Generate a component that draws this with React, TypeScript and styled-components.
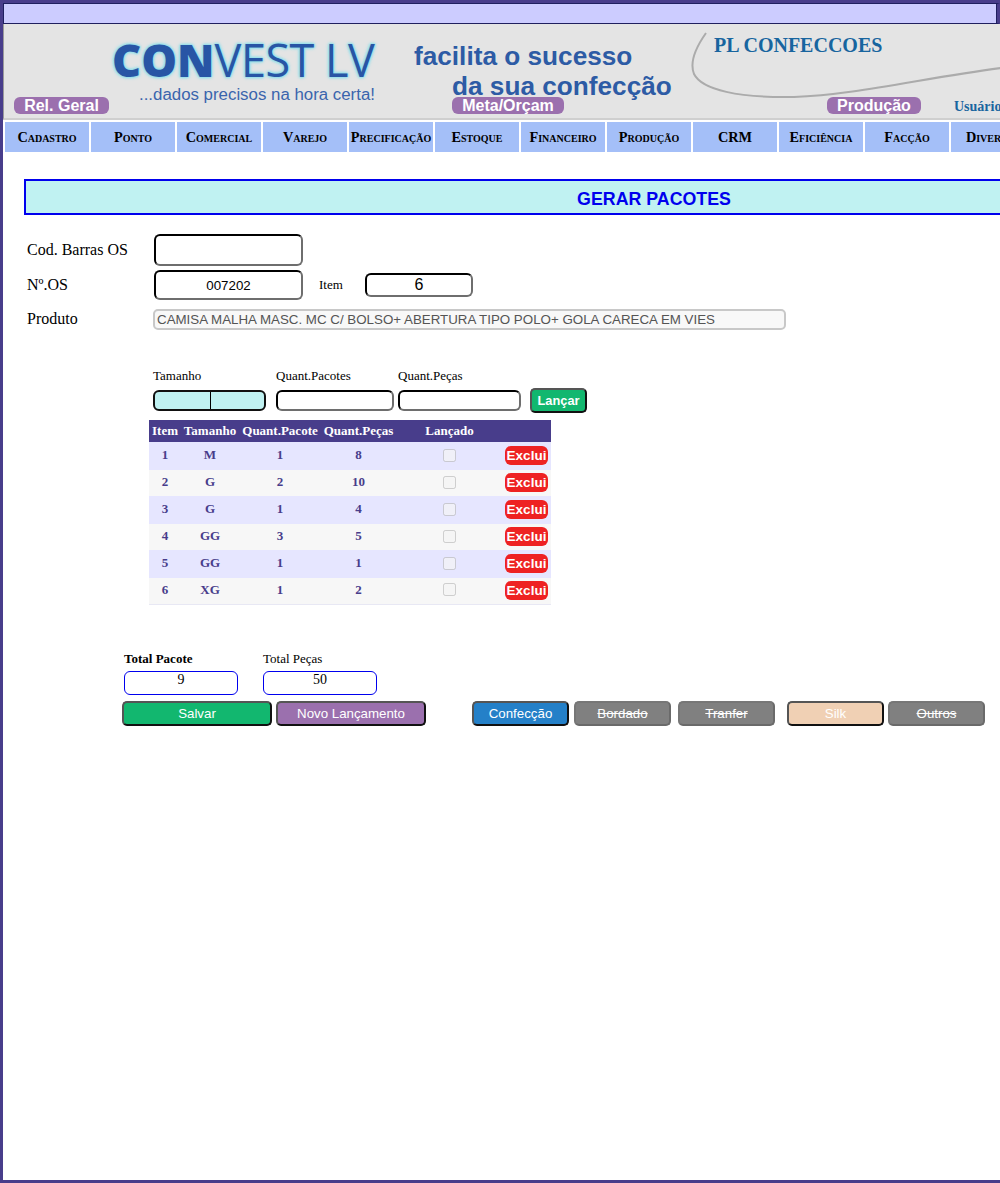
import styled, { createGlobalStyle, css } from 'styled-components';

const GlobalStyle = createGlobalStyle`
    html, body {
        margin: 0;
        padding: 0;
        height: 1183px;
        overflow: hidden;
        background: #fff;
        font-family: "Liberation Serif", serif;
    }
`;

const Frame = styled.div`
    box-sizing: border-box;
    width: 1000px;
    height: 1183px;
    overflow: hidden;
    border-top: 3px solid #483d8b;
    border-bottom: 3px solid #483d8b;
    border-left: 3px solid #483d8b;
`;

const TopBar = styled.div`
    box-sizing: border-box;
    height: 21px;
    background: #ccccff;
    border: 1px solid #1f1f5f;
    border-right: 3px solid #483d8b;
    box-shadow: inset -1px 0 0 #1f1f5f;
`;

const Banner = styled.header`
    position: relative;
    box-sizing: border-box;
    width: 997px;
    height: 96px;
    overflow: hidden;
    display: grid;
    grid-template-columns: 410px 278px 1fr;
    grid-template-rows: 73px 21px;
    background: #e4e4e4;
    border-left: 1px solid #9a9a9a;
    border-bottom: 2px solid #cfcfcf;
`;

const LogoBlock = styled.div`
    padding: 14px 0 0 108px;
`;

const LogoName = styled.div`
    font-family: "Open Sans", sans-serif;
    font-size: 45px;
    line-height: 44px;
    color: #2855a5;
    white-space: nowrap;
    text-shadow: 0 0 1px #93dfeb, 0 0 2px #93dfeb, 0 0 3px #93dfeb, 0 0 3px #93dfeb, 0 0 4px #93dfeb;
    b { font-weight: 800; }
    span { font-weight: 400; letter-spacing: -0.5px; }
`;

const Tagline = styled.div`
    margin: 4px 0 0 27px;
    font-family: "Liberation Sans", sans-serif;
    font-size: 16.85px;
    line-height: 18px;
    color: #3a64ad;
    white-space: nowrap;
`;

const Slogan = styled.div`
    padding-top: 17px;
    font-family: "Liberation Sans", sans-serif;
    font-weight: bold;
    font-size: 26.2px;
    line-height: 30px;
    color: #2d5ba5;
    white-space: nowrap;
    div + div { margin-left: 38px; }
`;

const Company = styled.div`
    padding: 10px 0 0 22px;
    font-weight: bold;
    font-size: 20px;
    line-height: 22px;
    color: #18659f;
    white-space: nowrap;
`;

const PillRow = styled.div`
    grid-column: 1 / -1;
    display: flex;
    align-items: flex-start;
    padding-left: 10px;
`;

const Pill = styled.div<{ $w: number; $mr: number }>`
    box-sizing: border-box;
    flex: 0 0 ${p => p.$w}px;
    margin-right: ${p => p.$mr}px;
    height: 17px;
    border-radius: 6px;
    background: #9b70ae;
    color: #fff;
    font-family: "Liberation Sans", sans-serif;
    font-weight: bold;
    font-size: 16px;
    line-height: 17px;
    text-align: center;
    white-space: nowrap;
`;

const UserLabel = styled.div`
    flex: none;
    font-weight: bold;
    font-size: 14px;
    line-height: 19px;
    color: #18659f;
`;

const ClippedLink = styled.div`
    position: absolute;
    left: 171px;
    top: 91px;
    font-family: "Liberation Sans", sans-serif;
    font-size: 13px;
    font-weight: bold;
    color: #0000ff;
`;

const Swoosh = styled.svg`
    position: absolute;
    left: 0;
    top: 0;
    pointer-events: none;
`;

const MenuBar = styled.nav`
    display: flex;
    gap: 2px;
    width: 1100px;
    margin: 2px 0 0 2px;
`;

const MenuItem = styled.div`
    flex: 0 0 84px;
    height: 30px;
    background: #a4bff8;
    color: #000;
    font-weight: bold;
    font-variant: small-caps;
    font-size: 14.3px;
    line-height: 30px;
    text-align: center;
    white-space: nowrap;
`;

const Title = styled.h1`
    box-sizing: border-box;
    width: 1260px;
    height: 36px;
    margin: 27px 0 0 21px;
    background: #c0f2f2;
    border: 2px solid #0000ee;
    color: #0000ee;
    font-family: "Liberation Sans", sans-serif;
    font-size: 17.8px;
    line-height: 37px;
    font-weight: bold;
    text-align: center;
`;

const Form = styled.section`
    padding: 19px 0 0 24px;
    display: grid;
    grid-template-columns: 127px auto;
    justify-content: start;
`;

const FieldLabel = styled.label<{ $mt?: number }>`
    font-size: 16px;
    align-self: center;
    margin-top: ${p => p.$mt ?? 0}px;
`;

const fieldBase = css`
    box-sizing: border-box;
    border-style: inset;
    border-width: 2px;
    border-color: #222 #6e6e6e #6e6e6e #222;
    border-radius: 6px;
    background: #fff;
    text-align: center;
    color: #000;
    outline: none;
    padding: 0;
`;

const InputRow = styled.div<{ $mt?: number }>`
    display: flex;
    align-items: center;
    margin-top: ${p => p.$mt ?? 0}px;
`;

const BigInput = styled.input`
    ${fieldBase}
    width: 149px;
    height: ${p => (p.readOnly ? 30 : 32)}px;
    font-family: "Liberation Sans", sans-serif;
    font-size: 13.33px;
`;

const ItemLabel = styled.span`
    margin: 0 22px 0 16px;
    font-size: 13px;
`;

const ItemInput = styled.input`
    ${fieldBase}
    width: 108px;
    height: 24px;
    font-family: "Liberation Sans", sans-serif;
    font-size: 16px;
`;

const ProductInput = styled.input`
    box-sizing: border-box;
    width: 633px;
    height: 21px;
    margin-left: -1px;
    padding: 0 2px;
    border: 2px solid #c8c8c8;
    border-radius: 5px;
    background: #f8f8f8;
    color: #545454;
    font-family: "Liberation Sans", sans-serif;
    font-size: 13.33px;
`;

const EntryGrid = styled.div`
    display: grid;
    grid-template-columns: 113px 128px 127px 66px;
    margin: 39px 0 0 150px;
`;

const EntryLabel = styled.label<{ $ml?: number }>`
    font-size: 13px;
    line-height: 14px;
    margin-left: ${p => p.$ml ?? 0}px;
`;

const EntryInput = styled.input<{ $ml?: number; $w: number }>`
    ${fieldBase}
    display: block;
    width: ${p => p.$w}px;
    height: 21px;
    margin: 7px 0 0 ${p => p.$ml ?? 0}px;
`;

const ActiveEntry = styled.div`
    position: relative;
    box-sizing: border-box;
    width: 113px;
    height: 21px;
    margin-top: 7px;
    border: 2px solid #111;
    border-radius: 6px;
    background: #c0f2f2;

    &::after {
        content: '';
        position: absolute;
        left: 55px;
        top: 0;
        width: 1px;
        height: 17px;
        background: #000;
    }
`;

const LaunchButton = styled.button`
    box-sizing: border-box;
    width: 57px;
    height: 25px;
    margin: 5px 0 0 9px;
    padding: 0;
    border: 2px solid;
    border-color: #555 #111 #111 #555;
    border-radius: 5px;
    background: #12b76f;
    color: #fff;
    font-family: "Liberation Sans", sans-serif;
    font-size: 12.8px;
    font-weight: bold;
`;

const ItemsTable = styled.table`
    width: 402px;
    margin: 7px 0 0 146px;
    table-layout: fixed;
    border-collapse: collapse;
    border-bottom: 1px solid #e8e8f4;
    font-size: 13px;
    font-weight: bold;
    text-align: center;
    color: #483d8b;
`;

const HeadRow = styled.tr`
    height: 22px;
    background: #483d8b;
    color: #fff;
`;

const HeadCell = styled.th<{ $w?: number }>`
    padding: 0;
    white-space: nowrap;
    ${p => (p.$w ? `width: ${p.$w}px;` : '')}
`;

const BodyRow = styled.tr<{ $odd: boolean }>`
    height: ${p => (p.$odd ? 28 : 26)}px;
    background: ${p => (p.$odd ? '#e6e6ff' : '#f7f7f7')};
`;

const BodyCell = styled.td`
    padding: 0 0 2px;
`;

const ButtonCell = styled.td`
    padding: 0 0 1px;
`;

const RowCheck = styled.input`
    display: block;
    margin: 0 auto;
    width: 13px;
    height: 13px;
`;

const DeleteButton = styled.button`
    display: block;
    box-sizing: border-box;
    width: 43px;
    height: 19px;
    margin: 0 3px 0 2px;
    padding: 0;
    border: none;
    border-radius: 6px;
    background: #ee2222;
    color: #fff;
    font-family: "Liberation Sans", sans-serif;
    font-size: 13.5px;
    line-height: 19px;
    font-weight: bold;
`;

const TotalsRow = styled.div`
    display: flex;
    gap: 25px;
    margin: 47px 0 0 121px;
`;

const TotalField = styled.div`
    width: 114px;
`;

const TotalLabel = styled.label<{ $bold?: boolean }>`
    display: block;
    font-size: 13px;
    line-height: 14px;
    font-weight: ${p => (p.$bold ? 'bold' : 'normal')};
`;

const TotalInput = styled.input`
    box-sizing: border-box;
    display: block;
    width: 114px;
    height: 24px;
    margin-top: 5px;
    padding: 0 0 6px;
    border: 1px solid #0000ee;
    border-radius: 6px;
    background: #fff;
    color: #000;
    font-family: "Liberation Serif", serif;
    font-size: 14px;
    text-align: center;
    outline: none;
`;

const ActionRow = styled.div`
    display: flex;
    margin: 6px 0 0 119px;
`;

const ActionButton = styled.button<{ $bg: string; $w: number; $ml: number; $off?: boolean }>`
    box-sizing: border-box;
    flex: 0 0 ${p => p.$w}px;
    height: 25px;
    margin-left: ${p => p.$ml}px;
    padding: 0;
    border: 2px solid;
    border-color: ${p => (p.$off ? '#777 #6a6a6a #6a6a6a #777' : '#555 #111 #111 #555')};
    border-radius: 5px;
    background: ${p => p.$bg};
    color: #fff;
    font-family: "Liberation Sans", sans-serif;
    font-size: 13.3px;
    text-decoration: ${p => (p.$off ? 'line-through' : 'none')};
`;

const menu = ['Cadastro', 'Ponto', 'Comercial', 'Varejo', 'Precificação', 'Estoque', 'Financeiro', 'Produção', 'CRM', 'Eficiência', 'Facção', 'Diversos'];

const rows = [
    { item: 1, size: 'M', packs: 1, pieces: 8 },
    { item: 2, size: 'G', packs: 2, pieces: 10 },
    { item: 3, size: 'G', packs: 1, pieces: 4 },
    { item: 4, size: 'GG', packs: 3, pieces: 5 },
    { item: 5, size: 'GG', packs: 1, pieces: 1 },
    { item: 6, size: 'XG', packs: 1, pieces: 2 },
];

const actions = [
    { label: 'Salvar', bg: '#12b76f', w: 150, ml: 0 },
    { label: 'Novo Lançamento', bg: '#9b70ae', w: 150, ml: 4 },
    { label: 'Confecção', bg: '#2480c8', w: 97, ml: 46 },
    { label: 'Bordado', bg: '#808080', w: 97, ml: 5, off: true },
    { label: 'Tranfer', bg: '#808080', w: 97, ml: 7, off: true },
    { label: 'Silk', bg: '#f0d0b4', w: 97, ml: 12 },
    { label: 'Outros', bg: '#808080', w: 97, ml: 4, off: true },
];

export default function App() {
    return (
        <Frame>
            <GlobalStyle />
            <TopBar />
            <Banner>
                <LogoBlock>
                    <LogoName><b>CON</b><span>VEST LV</span></LogoName>
                    <Tagline>...dados precisos na hora certa!</Tagline>
                </LogoBlock>
                <Slogan>
                    <div>facilita o sucesso</div>
                    <div>da sua confecção</div>
                </Slogan>
                <Company>PL CONFECCOES</Company>
                <PillRow>
                    <Pill $w={95} $mr={343}>Rel. Geral</Pill>
                    <Pill $w={112} $mr={263}>Meta/Orçam</Pill>
                    <Pill $w={94} $mr={33}>Produção</Pill>
                    <UserLabel>Usuário</UserLabel>
                </PillRow>
                <ClippedLink>Autenticar</ClippedLink>
                <Swoosh width="997" height="95" viewBox="0 0 997 95">
                    <path d="M702 9 C690 26 686 40 690 50 C698 66 735 74 790 73 C850 71 920 54 997 44" fill="none" stroke="#ababab" strokeWidth="2" />
                </Swoosh>
            </Banner>
            <MenuBar>
                {menu.map(name => <MenuItem key={name}>{name}</MenuItem>)}
            </MenuBar>
            <Title>GERAR PACOTES</Title>
            <Form>
                <FieldLabel>Cod. Barras OS</FieldLabel>
                <InputRow><BigInput /></InputRow>
                <FieldLabel $mt={4}>Nº.OS</FieldLabel>
                <InputRow $mt={4}>
                    <BigInput readOnly value="007202" />
                    <ItemLabel>Item</ItemLabel>
                    <ItemInput readOnly value="6" />
                </InputRow>
                <FieldLabel $mt={8}>Produto</FieldLabel>
                <InputRow $mt={9}>
                    <ProductInput disabled value="CAMISA MALHA MASC. MC C/ BOLSO+ ABERTURA TIPO POLO+ GOLA CARECA EM VIES" />
                </InputRow>
            </Form>
            <EntryGrid>
                <EntryLabel>Tamanho</EntryLabel>
                <EntryLabel $ml={10}>Quant.Pacotes</EntryLabel>
                <EntryLabel $ml={4}>Quant.Peças</EntryLabel>
                <span />
                <ActiveEntry />
                <EntryInput $w={118} $ml={10} />
                <EntryInput $w={123} $ml={4} />
                <LaunchButton>Lançar</LaunchButton>
            </EntryGrid>
            <ItemsTable>
                <thead>
                    <HeadRow>
                        <HeadCell $w={32}>Item</HeadCell>
                        <HeadCell $w={58}>Tamanho</HeadCell>
                        <HeadCell $w={82}>Quant.Pacote</HeadCell>
                        <HeadCell $w={75}>Quant.Peças</HeadCell>
                        <HeadCell $w={107}>Lançado</HeadCell>
                        <HeadCell />
                    </HeadRow>
                </thead>
                <tbody>
                    {rows.map((row, i) => (
                        <BodyRow key={row.item} $odd={i % 2 === 0}>
                            <BodyCell>{row.item}</BodyCell>
                            <BodyCell>{row.size}</BodyCell>
                            <BodyCell>{row.packs}</BodyCell>
                            <BodyCell>{row.pieces}</BodyCell>
                            <BodyCell><RowCheck type="checkbox" disabled /></BodyCell>
                            <ButtonCell><DeleteButton>Exclui</DeleteButton></ButtonCell>
                        </BodyRow>
                    ))}
                </tbody>
            </ItemsTable>
            <TotalsRow>
                <TotalField>
                    <TotalLabel $bold>Total Pacote</TotalLabel>
                    <TotalInput readOnly value="9" />
                </TotalField>
                <TotalField>
                    <TotalLabel>Total Peças</TotalLabel>
                    <TotalInput readOnly value="50" />
                </TotalField>
            </TotalsRow>
            <ActionRow>
                {actions.map(a => (
                    <ActionButton key={a.label} $bg={a.bg} $w={a.w} $ml={a.ml} $off={a.off}>{a.label}</ActionButton>
                ))}
            </ActionRow>
        </Frame>
    );
}
